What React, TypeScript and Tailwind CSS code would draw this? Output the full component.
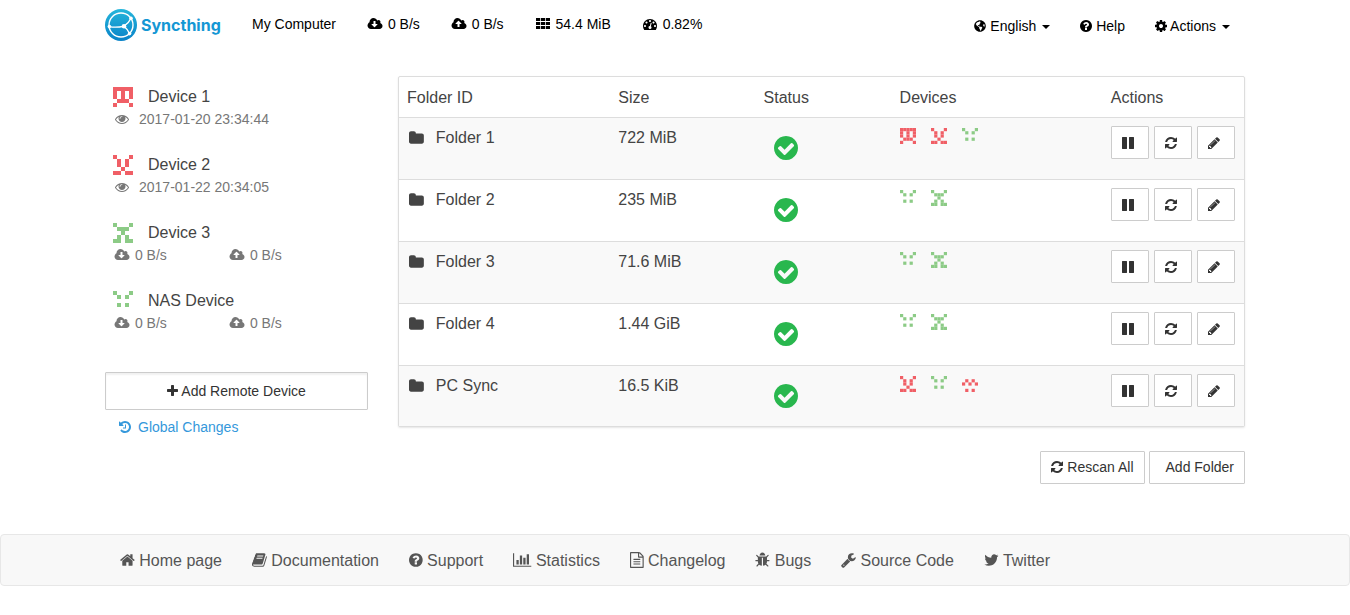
import { FaGlobeAmericas } from "react-icons/fa";

type Glyph = { x: number; w: number; d: string };

const DISC =
  "M1664 896q0 209-103 385.5t-279.5 279.5-385.5 103-385.5-103-279.5-279.5-103-385.5 103-385.5 279.5-279.5 385.5-103 385.5 103 279.5 279.5 103 385.5z";
const CLOUD =
  "M1856 1152q0 159-112.5 271.5t-271.5 112.5h-1088q-185 0-316.5-131.5t-131.5-316.5q0-130 70-240t188-165q-2-30-2-43 0-212 150-362t362-150q156 0 285.5 87t188.5 231q71-62 166-62 106 0 181 75t75 181q0 76-41 138 130 31 213.5 135.5t83.5 238.5z";

const glyphs = {
  cloudDown: {
    x: -64,
    w: 1920,
    d: "M1216 928q0-14-9-23t-23-9h-224v-352q0-13-9.5-22.5t-22.5-9.5h-192q-13 0-22.5 9.5t-9.5 22.5v352h-224q-13 0-22.5 9.5t-9.5 22.5q0 14 9 23l352 352q9 9 23 9t23-9l351-351q10-12 10-24z" + CLOUD,
  },
  cloudUp: {
    x: -64,
    w: 1920,
    d: "M1216 864q0-14-9-23l-352-352q-9-9-23-9t-23 9l-351 351q-10 12-10 24 0 14 9 23t23 9h224v352q0 13 9.5 22.5t22.5 9.5h192q13 0 22.5-9.5t9.5-22.5v-352h224q13 0 22.5-9.5t9.5-22.5z" + CLOUD,
  },
  th: {
    x: -64,
    w: 1920,
    d: "M0 128h544v384h-544zM640 128h512v384h-512zM1248 128h544v384h-544zM0 640h544v384h-544zM640 640h512v384h-512zM1248 640h544v384h-544zM0 1152h544v384h-544zM640 1152h512v384h-512zM1248 1152h544v384h-544z",
  },
  gauge: {
    x: 0,
    w: 1792,
    d: "M384 1152q0-53-37.5-90.5t-90.5-37.5-90.5 37.5-37.5 90.5 37.5 90.5 90.5 37.5 90.5-37.5 37.5-90.5zM576 704q0-53-37.5-90.5t-90.5-37.5-90.5 37.5-37.5 90.5 37.5 90.5 90.5 37.5 90.5-37.5 37.5-90.5zM1004 1185l101-382q6-26-7.5-48.5t-38.5-29.5-48 6.5-30 39.5l-101 382q-60 5-107 43.5t-63 98.5q-20 77 20 146t117 89 146-20 89-117q16-60-6-117t-72-91zM1664 1152q0-53-37.5-90.5t-90.5-37.5-90.5 37.5-37.5 90.5 37.5 90.5 90.5 37.5 90.5-37.5 37.5-90.5zM1024 512q0-53-37.5-90.5t-90.5-37.5-90.5 37.5-37.5 90.5 37.5 90.5 90.5 37.5 90.5-37.5 37.5-90.5zM1472 704q0-53-37.5-90.5t-90.5-37.5-90.5 37.5-37.5 90.5 37.5 90.5 90.5 37.5 90.5-37.5 37.5-90.5zM1792 1152q0 261-141 483-19 29-54 29h-1402q-35 0-54-29-141-221-141-483 0-182 71-348t191-286 286-191 348-71 348 71 286 191 191 286 71 348z",
  },
  question: {
    x: 128,
    w: 1536,
    d: "M1024 1376v-192q0-14-9-23t-23-9h-192q-14 0-23 9t-9 23v192q0 14 9 23t23 9h192q14 0 23-9t9-23zm256-672q0-88-55.5-163t-138.5-116-170-41q-243 0-371 213-15 24 8 42l132 100q7 6 19 6 16 0 25-12 53-68 86-92 34-24 86-24 48 0 85.5 26t37.5 59q0 38-20 61t-68 45q-63 28-115.5 86.5t-52.5 125.5v36q0 14 9 23t23 9h192q14 0 23-9t9-23q0-19 21.5-49.5t54.5-49.5q32-18 49-28.5t46-35 44.5-48 28-60.5 12.5-81z" + DISC,
  },
  cog: {
    x: 128,
    w: 1536,
    d: "M1152 896q0-106-75-181t-181-75-181 75-75 181 75 181 181 75 181-75 75-181zm512-109v222q0 12-8 23t-20 13l-185 28q-19 54-39 91 35 50 107 138 10 12 10 25t-9 23q-27 37-99 108t-94 71q-12 0-26-9l-138-108q-44 23-91 38-16 136-29 186-7 28-36 28h-222q-14 0-24.5-8.5t-11.5-21.5l-28-184q-49-16-90-37l-141 107q-10 9-25 9-14 0-25-11-126-114-165-168-7-10-7-23 0-12 8-23 15-21 51-66.5t54-70.5q-27-50-41-99l-183-27q-13-2-21-12.5t-8-23.5v-222q0-12 8-23t19-13l186-28q14-46 39-92-40-57-107-138-10-12-10-24 0-10 9-23 26-36 98.5-107.5t94.5-71.5q13 0 26 10l138 107q44-23 91-38 16-136 29-186 7-28 36-28h222q14 0 24.5 8.5t11.5 21.5l28 184q49 16 90 37l142-107q9-9 24-9 13 0 25 10 129 119 165 170 7 8 7 22 0 12-8 23-15 21-51 66.5t-54 70.5q26 50 41 98l183 28q13 2 21 12.5t8 23.5z",
  },
  eye: {
    x: 0,
    w: 1792,
    d: "M1664 960q-152-236-381-353 61 104 61 225 0 185-131.5 316.5t-316.5 131.5-316.5-131.5-131.5-316.5q0-121 61-225-229 117-381 353 133 205 333.5 326.5t434.5 121.5 434.5-121.5 333.5-326.5zm-720-384q0-20-14-34t-34-14q-125 0-214.5 89.5t-89.5 214.5q0 20 14 34t34 14 34-14 14-34q0-86 61-147t147-61q20 0 34-14t14-34zm848 384q0 34-20 69-140 230-376.5 368.5t-499.5 138.5-499.5-139-376.5-368q-20-35-20-69t20-69q140-229 376.5-368t499.5-139 499.5 139 376.5 368q20 35 20 69z",
  },
  plus: {
    x: 192,
    w: 1408,
    d: "M1600 736v192q0 40-28 68t-68 28h-416v416q0 40-28 68t-68 28h-192q-40 0-68-28t-28-68v-416h-416q-40 0-68-28t-28-68v-192q0-40 28-68t68-28h416v-416q0-40 28-68t68-28h192q40 0 68 28t28 68v416h416q40 0 68 28t28 68z",
  },
  history: {
    x: 128,
    w: 1536,
    d: "M1664 896q0 156-61 298t-164 245-245 164-298 61q-172 0-327-72.5t-264-204.5q-7-10-6.5-22.5t8.5-20.5l137-138q10-9 25-9 16 2 23 12 73 95 179 147t225 52q104 0 198.5-40.5t163.5-109.5 109.5-163.5 40.5-198.5-40.5-198.5-109.5-163.5-163.5-109.5-198.5-40.5q-98 0-188 35.5t-160 101.5l137 138q31 30 14 69-17 40-59 40h-448q-26 0-45-19t-19-45v-448q0-42 40-59 39-17 69 14l130 129q107-101 244.5-156.5t284.5-55.5q156 0 298 61t245 164 164 245 61 298zm-640-288v448q0 14-9 23t-23 9h-320q-14 0-23-9t-9-23v-64q0-14 9-23t23-9h224v-352q0-14 9-23t23-9h64q14 0 23 9t9 23z",
  },
  folder: {
    x: 64,
    w: 1664,
    d: "M1728 608v704q0 92-66 158t-158 66h-1216q-92 0-158-66t-66-158v-960q0-92 66-158t158-66h320q92 0 158 66t66 158v32h672q92 0 158 66t66 158z",
  },
  pause: {
    x: 128,
    w: 1536,
    d: "M1664 192v1408q0 26-19 45t-45 19h-512q-26 0-45-19t-19-45v-1408q0-26 19-45t45-19h512q26 0 45 19t19 45zm-896 0v1408q0 26-19 45t-45 19h-512q-26 0-45-19t-19-45v-1408q0-26 19-45t45-19h512q26 0 45 19t19 45z",
  },
  refresh: {
    x: 128,
    w: 1536,
    d: "M1639 1056q0 5-1 7-64 268-268 434.5t-478 166.5q-146 0-282.5-55t-243.5-157l-129 129q-19 19-45 19t-45-19-19-45v-448q0-26 19-45t45-19h448q26 0 45 19t19 45-19 45l-137 137q71 66 161 102t187 36q134 0 250-65t186-179q11-17 53-117 8-23 30-23h192q13 0 22.5 9.5t9.5 22.5zm25-800v448q0 26-19 45t-45 19h-448q-26 0-45-19t-19-45 19-45l138-138q-148-137-349-137-134 0-250 65t-186 179q-11 17-53 117-8 23-30 23h-199q-13 0-22.5-9.5t-9.5-22.5v-7q65-268 270-434.5t480-166.5q146 0 284 55.5t245 156.5l130-129q19-19 45-19t45 19 19 45z",
  },
  pencil: {
    x: 128,
    w: 1536,
    d: "M491 1536l91-91-235-235-91 91v107h128v128h107zm523-928q0-22-22-22-10 0-17 7l-542 542q-7 7-7 17 0 22 22 22 10 0 17-7l542-542q7-7 7-17zm-54-192l416 416-832 832h-416v-416zm683 96q0 53-37 90l-166 166-416-416 166-165q36-38 90-38 53 0 91 38l235 234q37 39 37 91z",
  },
  home: {
    x: 64,
    w: 1664,
    d: "M1472 992v480q0 26-19 45t-45 19h-384v-384h-256v384h-384q-26 0-45-19t-19-45v-480q0-1 .5-3t.5-3l575-474 575 474q1 2 1 6zm223-69l-62 74q-8 9-21 11h-3q-13 0-21-7l-692-577-692 577q-12 8-24 7-13-2-21-11l-62-74q-8-10-7-23.5t11-21.5l719-599q32-26 76-26t76 26l244 204v-195q0-14 9-23t23-9h192q14 0 23 9t9 23v408l219 182q10 8 11 21.5t-7 23.5z",
  },
  book: {
    x: 64,
    w: 1664,
    d: "M1703 478q40 57 18 129l-275 906q-19 64-76.5 107.5t-122.5 43.5h-923q-77 0-148.5-53.5t-99.5-131.5q-24-67-2-127 0-4 3-27t4-37q1-8-3-21.5t-3-19.5q2-11 8-21t16.5-23.5 16.5-23.5q23-38 45-91.5t30-91.5q3-10 .5-30t-.5-28q3-11 17-28t17-23q21-36 42-92t25-90q1-9-2.5-32t.5-28q4-13 22-30.5t22-22.5q19-26 42.5-84.5t27.5-96.5q1-8-3-25.5t-2-26.5q2-8 9-18t18-23 17-21q8-12 16.5-30.5t15-35 16-36 19.5-32 26.5-23.5 36-11.5 47.5 5.5l-1 3q38-9 51-9h761q74 0 114 56t18 130l-274 906q-36 119-71.5 153.5t-128.5 34.5h-869q-27 0-38 15-11 16-1 43 24 70 144 70h923q29 0 56-15.5t35-41.5l300-987q7-22 5-57 38 15 59 43zm-1064 2q-4 13 2 22.5t20 9.5h608q13 0 25.5-9.5t16.5-22.5l21-64q4-13-2-22.5t-20-9.5h-608q-13 0-25.5 9.5t-16.5 22.5zm-83 256q-4 13 2 22.5t20 9.5h608q13 0 25.5-9.5t16.5-22.5l21-64q4-13-2-22.5t-20-9.5h-608q-13 0-25.5 9.5t-16.5 22.5z",
  },
  chart: {
    x: 0,
    w: 2048,
    d: "M640 896v512h-256v-512h256zm384-512v1024h-256v-1024h256zm1024 1152v128h-2048v-1536h128v1408h1920zm-640-896v768h-256v-768h256zm384-384v1152h-256v-1152h256z",
  },
  file: {
    x: 128,
    w: 1536,
    d: "M1596 380q28 28 48 76t20 88v1152q0 40-28 68t-68 28h-1344q-40 0-68-28t-28-68v-1600q0-40 28-68t68-28h896q40 0 88 20t76 48zm-444-244v376h376q-10-29-22-41l-313-313q-12-12-41-22zm384 1528v-1024h-416q-40 0-68-28t-28-68v-416h-768v1536h1280zm-1024-864q0-14 9-23t23-9h704q14 0 23 9t9 23v64q0 14-9 23t-23 9h-704q-14 0-23-9t-9-23v-64zm736 224q14 0 23 9t9 23v64q0 14-9 23t-23 9h-704q-14 0-23-9t-9-23v-64q0-14 9-23t23-9h704zm0 256q14 0 23 9t9 23v64q0 14-9 23t-23 9h-704q-14 0-23-9t-9-23v-64q0-14 9-23t23-9h704z",
  },
  bug: {
    x: 64,
    w: 1664,
    d: "M1696 960q0 26-19 45t-45 19h-224q0 171-67 290l208 209q19 19 19 45t-19 45q-18 19-45 19t-45-19l-198-197q-5 5-15 13t-42 28.5-65 36.5-82 29-97 13v-896h-128v896q-51 0-101.5-13.5t-87-33-66-39-43.5-32.5l-15-14-183 207q-20 21-48 21-24 0-43-16-19-18-20.5-44.5t15.5-46.5l202-227q-58-114-58-274h-224q-26 0-45-19t-19-45 19-45 45-19h224v-294l-173-173q-19-19-19-45t19-45 45-19 45 19l173 173h844l173-173q19-19 45-19t45 19 19 45-19 45l-173 173v294h224q26 0 45 19t19 45zm-480-576h-640q0-133 93.5-226.5t226.5-93.5 226.5 93.5 93.5 226.5z",
  },
  wrench: {
    x: 64,
    w: 1664,
    d: "M448 1472q0-26-19-45t-45-19-45 19-19 45 19 45 45 19 45-19 19-45zm644-420l-682 682q-37 37-90 37-52 0-91-37l-106-108q-38-36-38-90 0-53 38-91l681-681q39 98 114.5 173.5t173.5 114.5zm634-435q0 39-23 106-47 134-164.5 217.5t-258.5 83.5q-185 0-316.5-131.5t-131.5-316.5 131.5-316.5 316.5-131.5q58 0 121.5 16.5t107.5 46.5q16 11 16 28t-16 28l-293 169v224l193 107q5-3 79-48.5t135.5-81 70.5-35.5q15 0 23.5 10t8.5 25z",
  },
  twitter: {
    x: 64,
    w: 1664,
    d: "M1684 408q-67 98-162 167 1 14 1 42 0 130-38 259.5t-115.5 248.5-184.5 210.5-258 146-323 54.5q-271 0-496-145 35 4 78 4 225 0 401-138-105-2-188-64.5t-114-159.5q33 5 61 5 43 0 85-11-112-23-185.5-111.5t-73.5-205.5v-4q68 38 146 41-66-44-105-115t-39-154q0-88 44-163 121 149 294.5 238.5t371.5 99.5q-8-38-8-74 0-134 94.5-228.5t228.5-94.5q140 0 236 102 109-21 205-78-37 115-142 178 93-10 186-50z",
  },
} satisfies Record<string, Glyph>;

type IconName = keyof typeof glyphs;

function Icon({ name, fixed = false }: { name: IconName; fixed?: boolean }) {
  const g = glyphs[name];
  return (
    <svg
      aria-hidden="true"
      viewBox={`${g.x} 0 ${g.w} 1792`}
      className={`inline-block h-[1em] shrink-0 overflow-visible align-[-0.143em] ${fixed ? "w-[18px]" : "w-auto"}`}
      fill="currentColor"
      fillRule="evenodd"
    >
      <path d={g.d} />
    </svg>
  );
}

function CheckCircle() {
  return (
    <svg role="img" aria-label="Up to Date" viewBox="128 128 1536 1536" className="mt-[10px] ml-[10px] size-6 text-[#29b74e]" fill="currentColor">
      <path d="M1412 734q0-28-18-46l-91-90q-19-19-45-19t-45 19l-408 407-226-226q-19-19-45-19t-45 19l-91 90q-18 18-18 46 0 27 18 45l362 362q19 19 45 19 27 0 46-19l543-543q18-18 18-45zm252 162q0 209-103 385.5t-279.5 279.5-385.5 103-385.5-103-279.5-279.5-103-385.5 103-385.5 279.5-279.5 385.5-103 385.5 103 279.5 279.5 103 385.5z" />
    </svg>
  );
}

type Identity = { rows: string[]; color: string };

const RED = "#f05f66";
const GREEN = "#8ccb86";

const ids = {
  device1: { color: RED, rows: ["11111", "10101", "10101", "01110", "10001"] },
  device2: { color: RED, rows: ["10001", "01010", "01010", "00100", "11011"] },
  device3: { color: GREEN, rows: ["10001", "01110", "00100", "01010", "11011"] },
  nas: { color: GREEN, rows: ["10001", "01010", "00000", "01010", "00000"] },
  self: { color: RED, rows: ["00000", "01010", "10101", "00000", "01010"] },
} satisfies Record<string, Identity>;

type DeviceKey = keyof typeof ids;

function Identicon({ id, className }: { id: DeviceKey; className: string }) {
  const { rows, color } = ids[id];
  return (
    <svg aria-hidden="true" viewBox="0 0 5 5" className={className} fill={color}>
      {rows.flatMap((row, y) =>
        [...row].map((c, x) => (c === "1" ? <rect key={`${x}-${y}`} x={x} y={y} width="1" height="1" /> : null)),
      )}
    </svg>
  );
}

function Logo() {
  return (
    <a href="#" className="flex items-center gap-1 text-[#1497d4]">
      <svg aria-hidden="true" viewBox="0 0 32 32" className="size-8">
        <defs>
          <linearGradient id="logo-fill" x1="0" y1="0" x2="0" y2="1">
            <stop offset="0" stopColor="#26b6db" />
            <stop offset="1" stopColor="#0882c8" />
          </linearGradient>
        </defs>
        <circle cx="16" cy="16" r="16" fill="url(#logo-fill)" />
        <g fill="none" stroke="#fff" strokeWidth="1.4">
          <circle cx="16" cy="16" r="12" />
          <path d="M19 17.2Q23.5 14.5 26 9.2M19 17.2Q11 18.8 4.2 17.6M19 17.2Q23 20.5 24.8 25" />
        </g>
        <g fill="#fff">
          <circle cx="19" cy="17.2" r="2.3" />
          <circle cx="26" cy="9.2" r="1.8" />
          <circle cx="4.4" cy="17.6" r="1.8" />
          <circle cx="24.6" cy="24.6" r="1.8" />
        </g>
      </svg>
      <span className="font-[Inter,sans-serif] text-base font-bold">Syncthing</span>
    </a>
  );
}

function Caret() {
  return (
    <svg aria-hidden="true" viewBox="0 0 8 4" className="ml-1.5 inline-block h-1 w-2 align-middle" fill="currentColor">
      <path d="M0 0h8L4 4z" />
    </svg>
  );
}

const stats: { icon: IconName; text: string }[] = [
  { icon: "cloudDown", text: "0 B/s" },
  { icon: "cloudUp", text: "0 B/s" },
  { icon: "th", text: "54.4 MiB" },
  { icon: "gauge", text: "0.82%" },
];

const devices: { id: DeviceKey; name: string; seen?: string }[] = [
  { id: "device1", name: "Device 1", seen: "2017-01-20 23:34:44" },
  { id: "device2", name: "Device 2", seen: "2017-01-22 20:34:05" },
  { id: "device3", name: "Device 3" },
  { id: "nas", name: "NAS Device" },
];

const folders: { name: string; size: string; devices: DeviceKey[] }[] = [
  { name: "Folder 1", size: "722 MiB", devices: ["device1", "device2", "nas"] },
  { name: "Folder 2", size: "235 MiB", devices: ["nas", "device3"] },
  { name: "Folder 3", size: "71.6 MiB", devices: ["nas", "device3"] },
  { name: "Folder 4", size: "1.44 GiB", devices: ["nas", "device3"] },
  { name: "PC Sync", size: "16.5 KiB", devices: ["device2", "nas", "self"] },
];

const rowActions: { icon: IconName; label: string }[] = [
  { icon: "pause", label: "Pause" },
  { icon: "refresh", label: "Rescan" },
  { icon: "pencil", label: "Edit" },
];

const links: { icon: IconName; text: string }[] = [
  { icon: "home", text: "Home page" },
  { icon: "book", text: "Documentation" },
  { icon: "question", text: "Support" },
  { icon: "chart", text: "Statistics" },
  { icon: "file", text: "Changelog" },
  { icon: "bug", text: "Bugs" },
  { icon: "wrench", text: "Source Code" },
  { icon: "twitter", text: "Twitter" },
];

function Header() {
  return (
    <header className="mx-auto flex max-w-[1140px] items-start justify-between text-sm text-black">
      <div className="flex items-center">
        <div className="flex h-[50px] w-[147px] items-center">
          <Logo />
        </div>
        <div className="flex h-12 items-center gap-[30px] self-start">
          <span>My Computer</span>
          {stats.map((s) => (
            <span key={s.icon}>
              <Icon name={s.icon} fixed /> {s.text}
            </span>
          ))}
        </div>
      </div>
      <nav className="flex h-[52px] items-center gap-[30px] pr-[15px]">
        <button type="button">
          <FaGlobeAmericas aria-hidden="true" className="inline-block size-3 align-[-1px]" /> English
          <Caret />
        </button>
        <a href="#">
          <Icon name="question" /> Help
        </a>
        <button type="button">
          <Icon name="cog" /> Actions
          <Caret />
        </button>
      </nav>
    </header>
  );
}

function Sidebar() {
  return (
    <aside>
      <ul className="pt-[9px] pl-2">
        {devices.map((d) => (
          <li key={d.id} className="h-[68px]">
            <div className="flex h-6 items-center gap-[15px]">
              <Identicon id={d.id} className="size-5" />
              <span>{d.name}</span>
            </div>
            {d.seen ? (
              <div className="flex h-5 items-center gap-2 text-sm text-[#777]">
                <Icon name="eye" fixed />
                <span>{d.seen}</span>
              </div>
            ) : (
              <div className="grid h-5 grid-cols-[115px_1fr] items-center text-sm text-[#777]">
                <span>
                  <Icon name="cloudDown" fixed /> 0 B/s
                </span>
                <span>
                  <Icon name="cloudUp" fixed /> 0 B/s
                </span>
              </div>
            )}
          </li>
        ))}
      </ul>
      <button
        type="button"
        className="mt-[15px] h-[38px] w-full rounded-[1px] border border-[#ccc] bg-white text-sm text-[#333] shadow-[inset_0_2px_2px_rgba(0,0,0,0.06)]"
      >
        <Icon name="plus" /> Add Remote Device
      </button>
      <a href="#" className="mt-[7px] ml-[14px] inline-flex items-center gap-[7px] text-sm text-[#3498db]">
        <Icon name="history" />
        <span>Global Changes</span>
      </a>
    </aside>
  );
}

const buttonBase = "rounded-[1px] border border-[#ccc] bg-white text-sm text-[#333]";

function Folders() {
  return (
    <section>
      <div className="rounded-xs border border-[#ddd] bg-white shadow-[0_1px_2px_rgba(0,0,0,0.1)]">
        <table className="w-full table-fixed text-left">
          <colgroup>
            <col className="w-[25%]" />
            <col className="w-[17.2%]" />
            <col className="w-[16.1%]" />
            <col className="w-[25%]" />
            <col />
          </colgroup>
          <thead>
            <tr>
              {["Folder ID", "Size", "Status", "Devices", "Actions"].map((h) => (
                <th key={h} scope="col" className="px-2 pt-[9px] pb-[7px] font-normal">
                  {h}
                </th>
              ))}
            </tr>
          </thead>
          <tbody>
            {folders.map((f) => (
              <tr key={f.name} className="h-[62px] border-t border-[#ddd] align-top last:h-[60px] odd:bg-[#f9f9f9]">
                <td className="p-2">
                  <div className="flex items-center gap-3 pl-[2px]">
                    <Icon name="folder" />
                    <span>{f.name}</span>
                  </div>
                </td>
                <td className="p-2">{f.size}</td>
                <td className="p-2">
                  <CheckCircle />
                </td>
                <td className="px-2 pt-[10px]">
                  <div className="flex gap-[15px]">
                    {f.devices.map((id) => (
                      <Identicon key={id} id={id} className="size-4" />
                    ))}
                  </div>
                </td>
                <td className="p-2">
                  <div className="flex gap-[5px]">
                    {rowActions.map((a) => (
                      <button key={a.icon} type="button" aria-label={`${a.label} ${f.name}`} className={`h-[33px] w-[38px] pr-1 ${buttonBase}`}>
                        <Icon name={a.icon} />
                      </button>
                    ))}
                  </div>
                </td>
              </tr>
            ))}
          </tbody>
        </table>
      </div>
      <div className="mt-6 flex justify-end gap-1">
        <button type="button" className={`h-[33px] px-[10px] ${buttonBase}`}>
          <Icon name="refresh" /> Rescan All
        </button>
        <button type="button" className={`h-[33px] pr-[10px] pl-4 ${buttonBase}`}>
          Add Folder
        </button>
      </div>
    </section>
  );
}

function Footer() {
  return (
    <footer className="mt-[50px] rounded-sm border border-[#e7e7e7] bg-[#f8f8f8]">
      <nav className="mx-auto flex h-[50px] max-w-[1140px] items-center gap-[30px] px-[15px] pt-0.5 text-[#555]">
        {links.map((l) => (
          <a key={l.text} href="#" className="whitespace-nowrap">
            <Icon name={l.icon} /> {l.text}
          </a>
        ))}
      </nav>
    </footer>
  );
}

export default function App() {
  return (
    <div className="bg-white font-['Liberation_Sans',Arial,sans-serif] text-base text-[#444]">
      <Header />
      <main className="mx-auto mt-6 grid max-w-[1140px] grid-cols-[263px_1fr] gap-[30px]">
        <Sidebar />
        <Folders />
      </main>
      <Footer />
    </div>
  );
}
